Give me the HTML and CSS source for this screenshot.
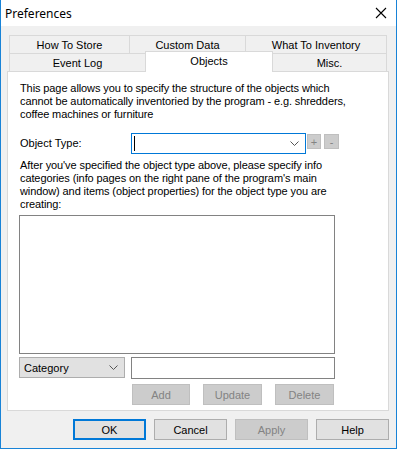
FILE: index.html
```html
<html lang="en">
<head>
    <meta charset="UTF-8">
    <title>Preferences</title>
    <link rel="stylesheet" href="styles.css">
</head>
<body>
<div class="window">
    <div class="titlebar">
        <span class="title">Preferences</span>
        <svg class="close" width="12" height="12" viewBox="0 0 12 12">
            <path d="M1 1 L11 11 M11 1 L1 11" stroke="#000" stroke-width="1.1" fill="none"/>
        </svg>
    </div>

    <div class="tabs">
        <div class="tabrow">
            <div class="tab w1">How To Store</div>
            <div class="tab w2">Custom Data</div>
            <div class="tab w3">What To Inventory</div>
        </div>
        <div class="tabrow">
            <div class="tab w4">Event Log</div>
            <div class="tab w5 active">Objects</div>
            <div class="tab w6">Misc.</div>
        </div>
    </div>

    <div class="panel">
        <p class="text">This page allows you to specify the structure of the objects which<br>
        cannot be automatically inventoried by the program - e.g. shredders,<br>
        coffee machines or furniture</p>

        <div class="typerow">
            <span class="label">Object Type:</span>
            <div class="combo focus">
                <span class="caret"></span>
                <svg class="chev" width="9" height="5" viewBox="0 0 9 5"><path d="M0.5 0.5 L4.5 4.5 L8.5 0.5" stroke="#555" fill="none"/></svg>
            </div>
            <div class="mini">+</div>
            <div class="mini minus">-</div>
        </div>

        <p class="text second">After you've specified the object type above, please specify info<br>
        categories (info pages on the right pane of the program's main<br>
        window) and items (object properties) for the object type you are<br>
        creating:</p>

        <div class="listbox"></div>

        <div class="editrow">
            <div class="combo cat">
                <span>Category</span>
                <svg class="chev" width="9" height="5" viewBox="0 0 9 5"><path d="M0.5 0.5 L4.5 4.5 L8.5 0.5" stroke="#555" fill="none"/></svg>
            </div>
            <div class="input"></div>
        </div>

        <div class="actions">
            <div class="btn off add">Add</div>
            <div class="btn off">Update</div>
            <div class="btn off">Delete</div>
        </div>
    </div>

    <div class="footer">
        <div class="btn big default">OK</div>
        <div class="btn big">Cancel</div>
        <div class="btn big off">Apply</div>
        <div class="btn big">Help</div>
    </div>
</div>
</body>
</html>
```

FILE: styles.css
```css
* {
    box-sizing: border-box;
}
body {
    margin: 0;
    font-family: "Liberation Sans", Arial, sans-serif;
    font-size: 11px;
    color: #000;
}
.window {
    width: 397px;
    height: 449px;
    background-color: #f0f0f0;
    border: 1px solid #1883d7;
    border-top: none;
}
.titlebar {
    height: 26px;
    background-color: #fff;
    display: flex;
    align-items: center;
    justify-content: space-between;
    padding: 0 9px 0 4px;
}
.title {
    font-family: "Noto Sans", sans-serif;
    font-size: 12px;
}

.tabs {
    margin-top: 9px;
    padding-left: 8px;
}
.tabrow {
    display: flex;
    height: 18px;
}
.tab {
    height: 18px;
    border: 1px solid #d9d9d9;
    border-bottom: none;
    margin-left: -1px;
    display: flex;
    align-items: center;
    justify-content: center;
    padding-top: 1px;
}
.tab:first-child {
    margin-left: 0;
}
.w1 { width: 121px; }
.w2 { width: 117px; }
.w3 { width: 142px; }
.w4 { width: 137px; }
.w5 { width: 128px; }
.w6 { width: 115px; }
.tab.active {
    background-color: #fff;
    height: 21px;
    margin-top: -2px;
    padding-top: 0;
    padding-bottom: 2px;
    position: relative;
    z-index: 1;
}

.panel {
    margin-left: 6px;
    width: 382px;
    height: 340px;
    background-color: #fff;
    border: 1px solid #d9d9d9;
    padding: 10px 12px 0 12px;
}
.text {
    margin: 0;
    line-height: 13px;
    white-space: nowrap;
    letter-spacing: -0.1px;
}
.typerow {
    display: flex;
    align-items: flex-start;
    margin-top: 12px;
    height: 21px;
}
.label {
    width: 111px;
    line-height: 21px;
}
.combo {
    width: 175px;
    height: 21px;
    border: 1px solid #7a7a7a;
    display: flex;
    align-items: center;
    justify-content: space-between;
    padding: 0 6px 0 2px;
}
.combo.focus {
    border-color: #0078d7;
}
.caret {
    width: 1px;
    height: 15px;
    background-color: #000;
}
.mini {
    width: 14px;
    height: 15px;
    margin-top: 1px;
    margin-left: 1px;
    background-color: #ccc;
    border: 1px solid #bfbfbf;
    color: #838383;
    display: flex;
    align-items: center;
    justify-content: center;
    font-size: 11px;
}
.mini.minus {
    margin-left: 3px;
    width: 15px;
}
.text.second {
    margin-top: 5px;
}
.listbox {
    margin-top: 4px;
    margin-left: -1px;
    width: 316px;
    height: 139px;
    border: 1px solid #828282;
}
.editrow {
    display: flex;
    margin-top: 3px;
    margin-left: -1px;
}
.combo.cat {
    width: 106px;
    background-color: #e1e1e1;
    border-color: #adadad;
    padding-left: 4px;
}
.input {
    width: 204px;
    height: 22px;
    margin-left: 6px;
    border: 1px solid #828282;
}
.actions {
    display: flex;
    gap: 13px;
    margin-top: 5px;
    margin-left: 112px;
}
.btn {
    width: 59px;
    height: 21px;
    background-color: #e1e1e1;
    border: 1px solid #adadad;
    display: flex;
    align-items: center;
    justify-content: center;
}
.btn.off {
    background-color: #ccc;
    border-color: #bfbfbf;
    color: #838383;
}
.btn.add {
    width: 58px;
}
.footer {
    display: flex;
    gap: 8px;
    justify-content: flex-end;
    padding-right: 7px;
    margin-top: 8px;
}
.btn.big {
    width: 73px;
}
.btn.default {
    border: 2px solid #0078d7;
}
```
